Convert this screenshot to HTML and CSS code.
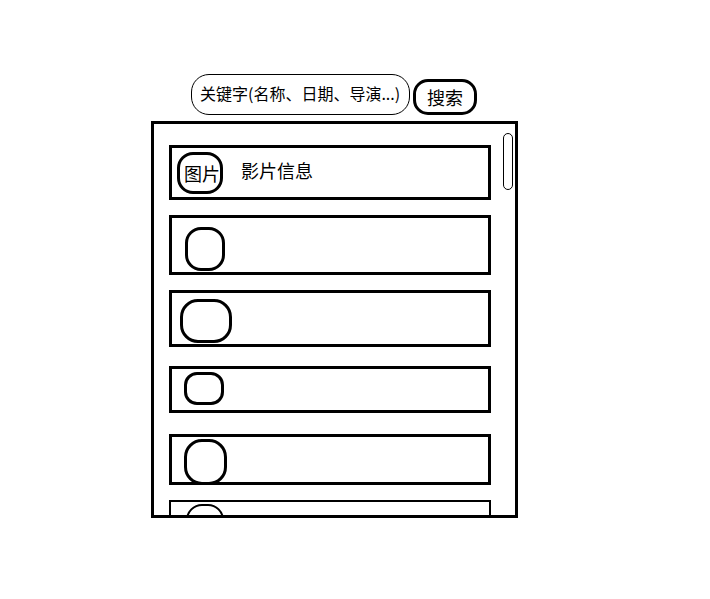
FILE: index.html
```html
<!DOCTYPE html>
<html lang="zh-CN">
<head>
<meta charset="utf-8">
<meta name="viewport" content="width=device-width, initial-scale=1">
<title>影片搜索</title>
<link rel="stylesheet" href="styles.css">
</head>
<body>
<form class="search" role="search">
  <input class="search-input" type="text" aria-label="关键字" placeholder="关键字(名称、日期、导演...)">
  <button class="search-button" type="button">搜索</button>
</form>
<main class="panel">
  <ul class="films">
    <li class="film film-first"><span class="thumb thumb-labelled">图片</span><span class="info">影片信息</span></li>
    <li class="film film-tall"><span class="thumb"></span></li>
    <li class="film film-wide"><span class="thumb"></span></li>
    <li class="film film-short"><span class="thumb"></span></li>
    <li class="film film-full"><span class="thumb"></span></li>
    <li class="film film-last"><span class="thumb"></span></li>
  </ul>
  <div class="scroll-thumb"></div>
</main>
</body>
</html>
```
FILE: styles.css
```css
* {
  box-sizing: border-box;
}

body {
  display: flex;
  flex-direction: column;
  gap: 6px;
  height: 100vh;
  margin: 0;
  padding: 74px 192px 81px 151px;
  background: #fff;
  color: #000;
  font: 18px/24px "Noto Sans CJK SC", sans-serif;
}

.search {
  display: flex;
  align-items: flex-end;
  gap: 3px;
  margin: 0;
  padding: 0 41px 0 40px;
}

.search-input {
  flex: 1;
  min-width: 0;
  height: 41px;
  padding: 0 0 4px 8px;
  border: 1px solid #000;
  border-radius: 18px;
  background: #fff;
  font: inherit;
  font-size: 16px;
  color: inherit;
}

.search-input::placeholder {
  color: #000;
  opacity: 1;
}

.search-button {
  width: 64px;
  height: 36px;
  padding: 0;
  border: 3px solid #000;
  border-radius: 15px;
  background: #fff;
  font: inherit;
  color: inherit;
}

.panel {
  position: relative;
  flex: 1;
  min-height: 0;
  overflow: hidden;
  border: 3px solid #000;
}

.films {
  display: flex;
  flex-direction: column;
  gap: 15px;
  margin: 0;
  padding: 21px 24px 0 15px;
  list-style: none;
}

.film {
  display: flex;
  border: 3px solid #000;
}

.thumb {
  width: 40px;
  height: 44px;
  border: 3px solid #000;
  border-radius: 16px;
}

.film-first {
  gap: 18px;
  padding: 4px 5px 3px;
}

.thumb-labelled {
  width: 46px;
  height: 42px;
  padding: 6px 4px;
  white-space: nowrap;
}

.info {
  padding-top: 6px;
}

.film-tall {
  padding: 9px 13px 1px;
}

.film-wide {
  padding: 6px 8px 1px;
}

.film-wide .thumb {
  width: 52px;
  border-radius: 18px;
}

.film-short {
  margin-top: 4px;
  padding: 3px 12px 5px;
}

.film-short .thumb {
  height: 33px;
  border-radius: 13px;
}

.film-full {
  margin-top: 6px;
  padding: 2px 12px 0;
}

.film-full .thumb {
  width: 43px;
  height: 46px;
  margin-bottom: -3px;
  border-radius: 18px;
}

.film-last {
  padding: 2px 15px;
  border-width: 2px;
}

.film-last .thumb {
  width: 38px;
  border-width: 2px;
}

.scroll-thumb {
  position: absolute;
  top: 9px;
  right: 2px;
  width: 10px;
  height: 57px;
  border: 1px solid #000;
  border-radius: 5px;
}
```
